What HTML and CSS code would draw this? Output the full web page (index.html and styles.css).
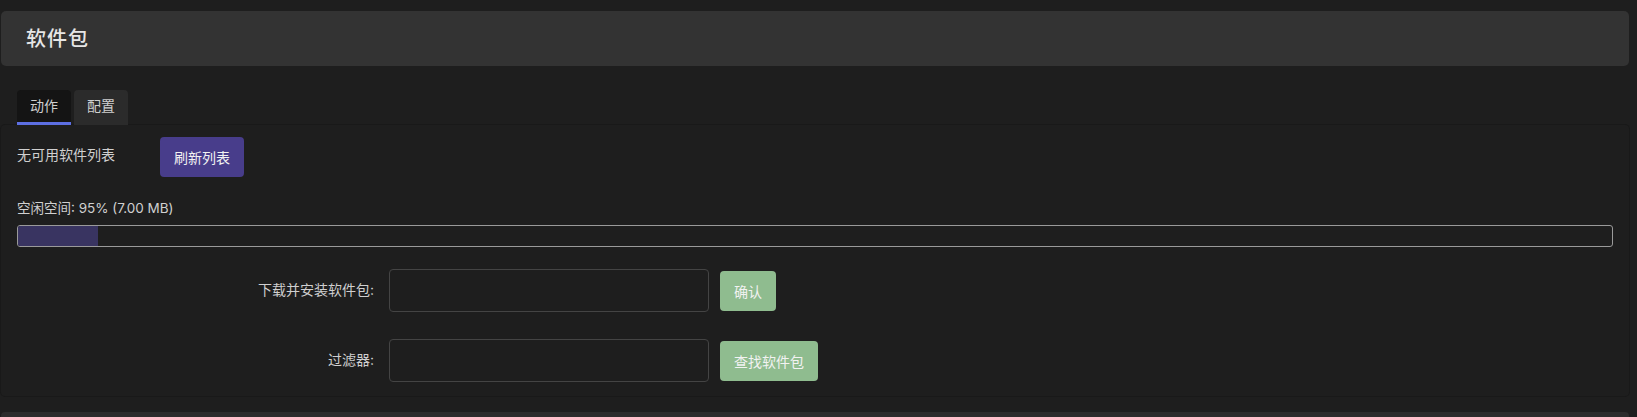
FILE: index.html
```html
<!DOCTYPE html>
<html lang="zh-CN">
<head>
<meta charset="utf-8">
<title>软件包</title>
<link rel="stylesheet" href="styles.css">
</head>
<body>
<div class="page">
  <header class="title-card"><h2 class="title">软件包</h2></header>

  <nav class="tabs">
    <div class="tab active">动作</div>
    <div class="tab">配置</div>
  </nav>

  <section class="panel">
    <div class="row-list">
      <div class="desc">无可用软件列表</div>
      <button class="btn btn-purple">刷新列表</button>
    </div>

    <div class="space-label">空闲空间: 95% (7.00 MB)</div>
    <div class="progress"><div class="progress-fill" style="width:5%"></div></div>

    <div class="form-row first">
      <label class="form-label">下载并安装软件包:</label>
      <input class="form-input" type="text">
      <button class="btn btn-green">确认</button>
    </div>
    <div class="form-row">
      <label class="form-label">过滤器:</label>
      <input class="form-input" type="text">
      <button class="btn btn-green">查找软件包</button>
    </div>
  </section>

  <div class="next-card"></div>
</div>
</body>
</html>
```

FILE: styles.css
```css
* { box-sizing: border-box; }
html, body { margin: 0; padding: 0; }
body {
  background: #1e1e1e;
  font-family: "Inter", "Noto Sans CJK SC", sans-serif;
  color: #cfcfcf;
  overflow: hidden;
}
.page {
  padding: 11px 8px 0 1px;
}
.title-card {
  height: 55px;
  background: #333333;
  border-radius: 5px;
  display: flex;
  align-items: center;
  padding-left: 25px;
}
.title {
  margin: 0;
  font-size: 20px;
  font-weight: 500;
  letter-spacing: 1px;
  color: #e6e6e6;
  line-height: 1;
}
.tabs {
  display: flex;
  gap: 3px;
  margin-top: 24px;
  padding-left: 16px;
}
.tab {
  height: 35px;
  padding: 0 13px;
  font-size: 14px;
  line-height: 32px;
  color: #cfcfcf;
  background: #2b2b2b;
  border-radius: 4px 4px 0 0;
}
.tab.active {
  background: #141414;
  border-bottom: 3px solid #5d6fe2;
}
.panel {
  background: #1e1e1e;
  border-radius: 4px;
  box-shadow: 0 0 0 1px #191919;
  padding: 12px 16px 14px 16px;
  height: 271px;
}
.row-list {
  display: flex;
  align-items: flex-start;
}
.desc {
  font-size: 14px;
  line-height: 20px;
  margin-top: 8px;
  width: 143px;
  color: #d0d0d0;
}
.btn {
  height: 40px;
  padding: 0 14px;
  border: none;
  border-radius: 4px;
  font-family: inherit;
  font-size: 14px;
  color: #f2f2f2;
  cursor: pointer;
}
.btn-purple { background: #483d8b; }
.btn-green { background: #8fbc8f; }
.space-label {
  margin-top: 22px;
  font-size: 13.5px;
  line-height: 19px;
  color: #d0d0d0;
}
.progress {
  margin-top: 7px;
  height: 22px;
  border: 1px solid #9a9a9a;
  border-radius: 3px;
  overflow: hidden;
}
.progress-fill {
  height: 100%;
  background: #393461;
}
.form-row {
  display: flex;
  align-items: center;
  margin-top: 27px;
}
.form-row.first { margin-top: 22px; }
.form-label {
  width: 357px;
  text-align: right;
  font-size: 14px;
  color: #cfcfcf;
  margin-right: 15px;
  margin-top: -4px;
}
.form-input {
  width: 320px;
  height: 43px;
  background: #1e1e1e;
  border: 1px solid #444444;
  border-radius: 4px;
  margin-right: 11px;
}
.form-row .btn { margin-top: 1px; }
.next-card {
  margin-top: 16px;
  height: 20px;
  background: #2c2c2c;
  border-radius: 4px 4px 0 0;
}
```
